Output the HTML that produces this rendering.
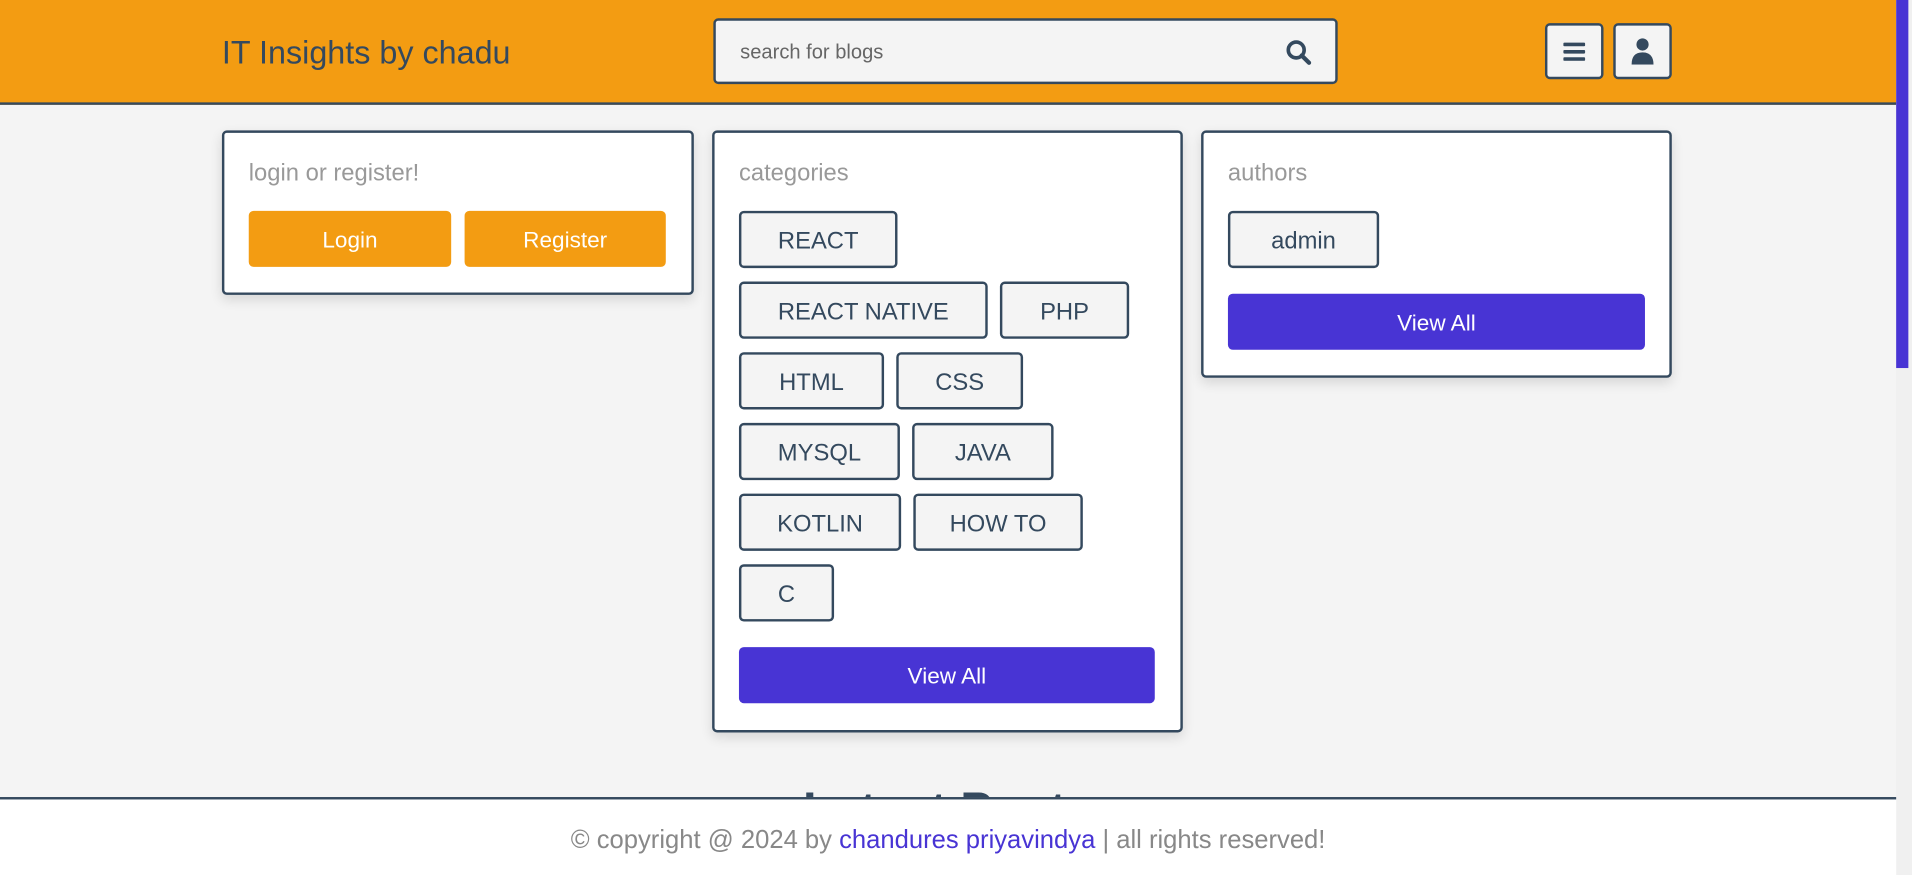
<!DOCTYPE html>
<html><head><meta charset="utf-8"><style>
html,body{margin:0;padding:0;width:1912px;height:875px;overflow:hidden;background:#f4f4f4;}
#w{position:absolute;left:0;top:0;width:1568px;height:718px;transform:scale(1.2194,1.2187);transform-origin:0 0;font-family:"Liberation Sans",sans-serif;background:#f4f4f4;overflow:hidden;}
.a{position:absolute;box-sizing:border-box;}
.hdr{left:0;top:0;width:1555px;height:86px;background:#f39c12;border-bottom:2px solid #34495e;}
.card{background:#fff;border:2px solid #34495e;border-radius:4px;box-shadow:0 4px 10px rgba(0,0,0,.12);}
.ttl{font-size:19.5px;color:#999;}
.tag{height:47px;border:2px solid #34495e;border-radius:4px;background:#f4f4f4;color:#34495e;font-size:19.5px;display:flex;align-items:center;justify-content:center;padding-top:3px;}
.btn{border-radius:4px;color:#fff;font-size:18.5px;display:flex;align-items:center;justify-content:center;padding-top:2px;}
.or{background:#f39c12;}
.pu{background:#4834d4;}
.ib{top:19px;width:48px;height:46px;border:2px solid #34495e;border-radius:4px;background:#f4f4f4;display:flex;align-items:center;justify-content:center;}
</style></head><body><div id="w">
<div class="a hdr"></div>
<div class="a" style="left:182px;top:28px;font-size:26.5px;color:#34495e;">IT Insights by chadu</div>
<div class="a" style="left:585px;top:15px;width:512px;height:54px;background:#f4f4f4;border:2px solid #34495e;border-radius:4px;"></div>
<div class="a" style="left:607px;top:34px;font-size:16.5px;color:#666;">search for blogs</div>
<svg class="a" style="left:1054px;top:32px" width="22" height="22" viewBox="0 0 22 22"><circle cx="9" cy="9" r="6.5" fill="none" stroke="#34495e" stroke-width="3"/><line x1="13.5" y1="13.5" x2="19.5" y2="19.5" stroke="#34495e" stroke-width="3.5" stroke-linecap="round"/></svg>
<div class="a ib" style="left:1267px;"><svg width="18" height="16"><rect y="1" width="18" height="3" rx="1" fill="#34495e"/><rect y="7" width="18" height="3" rx="1" fill="#34495e"/><rect y="13" width="18" height="3" rx="1" fill="#34495e"/></svg></div>
<div class="a ib" style="left:1323px;"><svg width="18" height="22"><circle cx="9" cy="5.5" r="5" fill="#34495e"/><path d="M0 22 Q0 12 9 12 Q18 12 18 22 Z" fill="#34495e"/></svg></div>
<div class="a" style="left:1555px;top:0;width:13px;height:718px;background:#f0f0f0;"></div>
<div class="a" style="left:1555px;top:0;width:10px;height:302px;background:#4834d4;"></div>

<div class="a card" style="left:182px;top:107px;width:387px;height:135px;"></div>
<div class="a ttl" style="left:204px;top:131px;">login or register!</div>
<div class="a btn or" style="left:204px;top:173px;width:166px;height:46px;">Login</div>
<div class="a btn or" style="left:381px;top:173px;width:165px;height:46px;">Register</div>

<div class="a card" style="left:584px;top:107px;width:386px;height:494px;"></div>
<div class="a ttl" style="left:606px;top:131px;">categories</div>
<div class="a tag" style="left:606px;top:173px;width:130px;">REACT</div>
<div class="a tag" style="left:606px;top:231px;width:204px;">REACT NATIVE</div>
<div class="a tag" style="left:820px;top:231px;width:106px;">PHP</div>
<div class="a tag" style="left:606px;top:289px;width:119px;">HTML</div>
<div class="a tag" style="left:735px;top:289px;width:104px;">CSS</div>
<div class="a tag" style="left:606px;top:347px;width:132px;">MYSQL</div>
<div class="a tag" style="left:748px;top:347px;width:116px;">JAVA</div>
<div class="a tag" style="left:606px;top:405px;width:133px;">KOTLIN</div>
<div class="a tag" style="left:749px;top:405px;width:139px;">HOW TO</div>
<div class="a tag" style="left:606px;top:463px;width:78px;">C</div>
<div class="a btn pu" style="left:606px;top:531px;width:341px;height:46px;">View All</div>

<div class="a card" style="left:985px;top:107px;width:386px;height:203px;"></div>
<div class="a ttl" style="left:1007px;top:131px;">authors</div>
<div class="a tag" style="left:1007px;top:173px;width:124px;">admin</div>
<div class="a btn pu" style="left:1007px;top:241px;width:342px;height:46px;">View All</div>

<div class="a" style="left:0;top:643px;width:1555px;text-align:center;font-size:40px;font-weight:bold;color:#34495e;">Latest Posts</div>
<div class="a" style="left:0;top:654px;width:1555px;height:64px;background:#fff;border-top:2px solid #34495e;"></div>
<div class="a" style="left:0;top:678px;width:1555px;text-align:center;font-size:21px;color:#888;">© copyright @ 2024 by <span style="color:#4834d4">chandures priyavindya</span> | all rights reserved!</div>
</div></body></html>
